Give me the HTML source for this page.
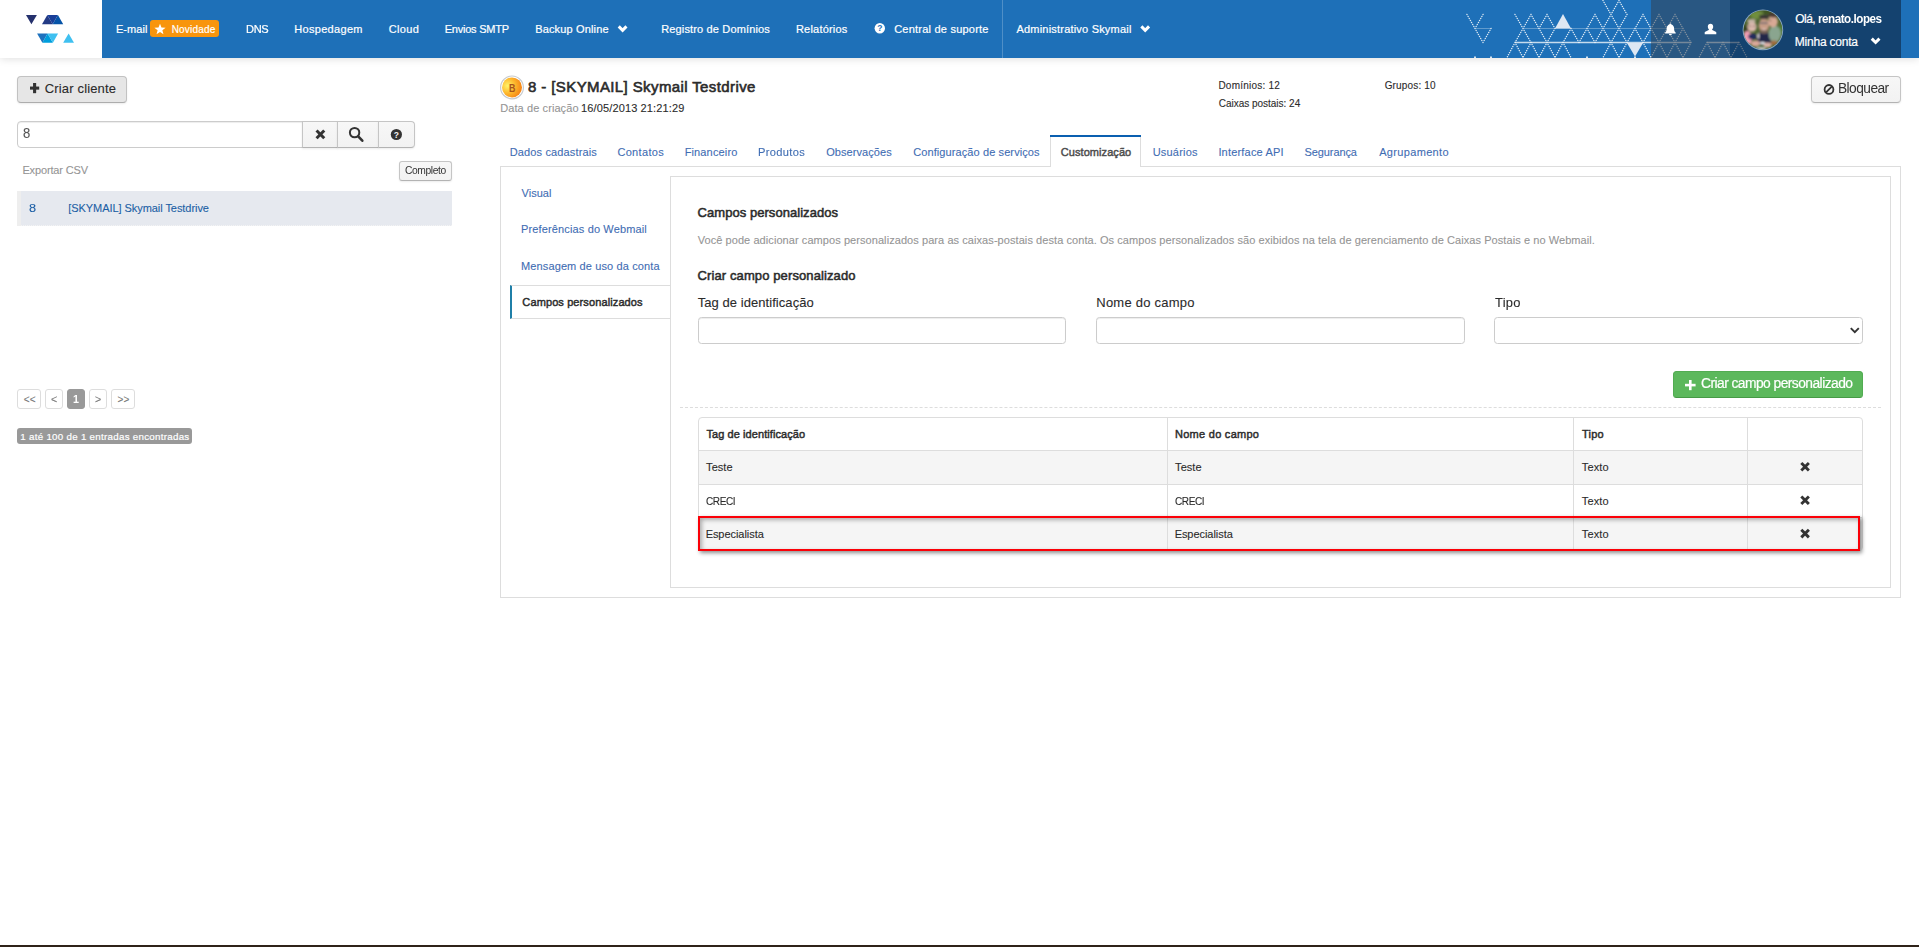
<!DOCTYPE html>
<html lang="pt-BR">
<head>
<meta charset="utf-8">
<title>Skymail - Administrativo</title>
<style>
html,body{margin:0;padding:0;background:#fff;}
body{width:1919px;height:947px;overflow:hidden;position:relative;font-family:"Liberation Sans",sans-serif;}
.a{position:absolute;box-sizing:border-box;}
.t{position:absolute;line-height:1;white-space:pre;transform-origin:0 0;font-family:"Liberation Sans",sans-serif;}
svg{position:absolute;overflow:visible;}
.btn{position:absolute;box-sizing:border-box;border:1px solid #c5c5c5;border-bottom-color:#b3b3b3;border-radius:4px;background:linear-gradient(#f7f7f7,#f2f2f2);box-shadow:0 1px 2px rgba(0,0,0,.08);}
.inp{position:absolute;box-sizing:border-box;border:1px solid #ccc;border-radius:3.5px;background:#fff;box-shadow:inset 0 1px 1px rgba(0,0,0,.075);}
.pg{position:absolute;box-sizing:border-box;border:1px solid #ddd;border-radius:3px;background:#fff;top:389px;height:20px;}
.vl{position:absolute;width:1px;background:#ddd;}
.hl{position:absolute;height:1px;background:#ddd;}
</style>
</head>
<body>
<!-- HEADER -->
<div class="a" id="hdr" style="left:0;top:0;width:1919px;height:58px;background:#1e70b8;box-shadow:0 1px 8px rgba(0,0,0,.13);"></div>
<div class="a" style="left:0;top:0;width:102px;height:58px;background:#fff;"></div>
<svg class="a" style="left:0;top:0" width="102" height="58" viewBox="0 0 102 58">
<polygon points="26,15 36.9,15 31.4,24.3" fill="#25316d"/>
<polygon points="42,24.3 47.3,15 52.7,24.3" fill="#233b85"/>
<polygon points="47.3,15 57.9,15 52.7,24.3" fill="#1a3f99"/>
<polygon points="52.7,24.3 57.9,15 63.2,24.3" fill="#0654a8"/>
<polygon points="37.1,33.4 47.6,33.4 42.4,42.8" fill="#1e72be"/>
<polygon points="42.4,42.8 47.6,33.4 52.9,42.8" fill="#009edc"/>
<polygon points="47.6,33.4 58.1,33.4 52.9,42.8" fill="#3fc0f0"/>
<polygon points="63.2,42.8 68.6,33.4 74,42.8" fill="#3fc0f0"/>
</svg>
<div class="a" style="left:150px;top:20px;width:69px;height:17px;background:#f8950d;border-radius:3px;"></div>
<div class="a" style="left:1002px;top:0;width:1px;height:58px;background:rgba(255,255,255,.22);"></div>
<svg class="a" style="left:0;top:0" width="1919" height="58" viewBox="0 0 1919 58">
<path d="M1467,14.5L1475,28.5 M1483,14.5L1475,28.5 M1475,28.5L1483,42.5 M1491,28.5L1483,42.5 M1515,14.5L1523,28.5 M1531,14.5L1523,28.5 M1531,14.5L1539,28.5 M1547,14.5L1539,28.5 M1547,14.5L1555,28.5 M1595,14.5L1587,28.5 M1595,14.5L1603,28.5 M1611,14.5L1603,28.5 M1611,14.5L1619,28.5 M1627,14.5L1619,28.5 M1643,14.5L1635,28.5 M1643,14.5L1651,28.5 M1659,14.5L1651,28.5 M1659,14.5L1667,28.5 M1675,14.5L1667,28.5 M1675,14.5L1683,28.5 M1603,0.5L1611,14.5 M1619,0.5L1611,14.5 M1619,0.5L1627,14.5 M1523,28.5L1515,42.5 M1523,28.5L1531,42.5 M1539,28.5L1547,42.5 M1555,28.5L1547,42.5 M1571,28.5L1563,42.5 M1571,28.5L1579,42.5 M1587,28.5L1579,42.5 M1587,28.5L1595,42.5 M1603,28.5L1595,42.5 M1603,28.5L1611,42.5 M1619,28.5L1611,42.5 M1619,28.5L1627,42.5 M1635,28.5L1627,42.5 M1635,28.5L1643,42.5 M1651,28.5L1643,42.5 M1651,28.5L1659,42.5 M1667,28.5L1659,42.5 M1667,28.5L1675,42.5 M1683,28.5L1675,42.5 M1683,28.5L1691,42.5 M1515,42.5L1507,57.5 M1515,42.5L1523,57.5 M1531,42.5L1523,57.5 M1531,42.5L1539,57.5 M1547,42.5L1539,57.5 M1547,42.5L1555,57.5 M1563,42.5L1555,57.5 M1563,42.5L1571,57.5 M1611,42.5L1603,57.5 M1611,42.5L1619,57.5 M1627,42.5L1619,57.5 M1643,42.5L1651,57.5 M1659,42.5L1651,57.5 M1659,42.5L1667,57.5 M1675,42.5L1667,57.5 M1675,42.5L1683,57.5 M1691,42.5L1683,57.5 M1707,42.5L1699,57.5 M1707,42.5L1715,57.5 M1723,42.5L1715,57.5 M1723,42.5L1731,57.5 M1739,42.5L1731,57.5 M1739,42.5L1747,57.5" fill="none" stroke="#fff" stroke-opacity=".85" stroke-width="1.45" stroke-dasharray="0.01 2.2935" stroke-linecap="round"/>
<path d="M1475,28.5H1491M1523,28.5H1683" stroke="#fff" stroke-opacity=".3" stroke-width="1" fill="none"/>
<path d="M1515,42.5H1691M1707,42.5H1739" stroke="#fff" stroke-opacity=".75" stroke-width="1.4" fill="none"/>
<polygon points="1563,14 1571,28.4 1555,28.4" fill="#dde7f3"/>
<polygon points="1627,43 1643,43 1635,56.5" fill="#dde7f3"/>
<rect x="1474" y="56.5" width="2" height="1.5" fill="#fff" opacity=".8"/><rect x="1490" y="56.5" width="2" height="1.5" fill="#fff" opacity=".8"/><rect x="1586" y="56.5" width="2" height="1.5" fill="#fff" opacity=".8"/><rect x="1634" y="56.5" width="2" height="1.5" fill="#fff" opacity=".8"/>
</svg>
<div class="a" style="left:1651px;top:0;width:79px;height:58px;background:rgba(51,68,85,.55);"></div>
<div class="a" style="left:1730px;top:0;width:171px;height:58px;background:rgba(13,35,62,.6);"></div>
<svg class="a" style="left:0;top:0" width="1919" height="58" viewBox="0 0 1919 58">
<polygon points="160.00,23.70 161.47,27.58 165.61,27.78 162.38,30.37 163.47,34.37 160.00,32.10 156.53,34.37 157.62,30.37 154.39,27.78 158.53,27.58" fill="#fff"/>
<polyline points="618.75,26.43 622.60,30.28 626.45,26.43" fill="none" stroke="#fff" stroke-width="3.0" stroke-linecap="butt" stroke-linejoin="miter"/>
<polyline points="1141.35,26.43 1145.20,30.28 1149.05,26.43" fill="none" stroke="#fff" stroke-width="3.0" stroke-linecap="butt" stroke-linejoin="miter"/>
<polyline points="1871.75,38.63 1875.60,42.48 1879.45,38.63" fill="none" stroke="#fff" stroke-width="3.0" stroke-linecap="butt" stroke-linejoin="miter"/>
<circle cx="879.8" cy="28.3" r="5.2" fill="#fff"/>
<text x="879.8" y="31.4" text-anchor="middle" font-family="Liberation Sans, sans-serif" font-weight="700" font-size="8.5" fill="#1e70b8">?</text>
<path d="M1670.4,23.6c.6,0 1,.4 1,.9c1.7,.5 2.7,2 2.7,3.9c0,2.2 .5,3.4 1.6,4.2v.9h-10.6v-.9c1.1,-.8 1.6,-2 1.6,-4.2c0,-1.900 1,-3.400 2.700,-3.900c0,-.5 .4,-.9 1,-.9zM1669,33.900h2.800c0,.8 -.6,1.400 -1.400,1.400c-.8,0 -1.400,-.6 -1.400,-1.400z" fill="#fff"/>
<path d="M1710.500,23.800c1.600,0 2.700,1.200 2.700,2.900c0,1 -.4,2 -1,2.600c-.2,.2 -.2,.6 .1,.8l3.400,1.600c.4,.2 .6,.5 .6,.9v1.600h-11.600v-1.600c0,-.4 .2,-.7 .6,-.9l3.400,-1.600c.3,-.2 .3,-.6 .1,-.8c-.6,-.6 -1,-1.600 -1,-2.600c0,-1.700 1.100,-2.900 2.700,-2.900z" fill="#fff"/>
<defs><clipPath id="av"><circle cx="1762.900" cy="29.900" r="19.300"/></clipPath>
<filter id="bl" x="-50%" y="-50%" width="200%" height="200%"><feGaussianBlur stdDeviation="0.850"/></filter></defs>
<circle cx="1762.900" cy="29.900" r="20.300" fill="#86a4c0"/>
<g clip-path="url(#av)"><rect x="1742" y="9" width="42" height="42" fill="#4d6430"/>
<g filter="url(#bl)">
<ellipse cx="1757" cy="15" rx="7" ry="4" fill="#6f8f3c"/>
<ellipse cx="1768" cy="12" rx="5" ry="2.500" fill="#3f5524"/>
<ellipse cx="1746" cy="30" rx="3" ry="5" fill="#33421f"/>
<ellipse cx="1781" cy="30" rx="2.500" ry="6" fill="#4f7a35"/>
<rect x="1757" y="33" width="14" height="12" rx="3" fill="#20264a"/>
<ellipse cx="1763.900" cy="25.600" rx="5.200" ry="7.200" fill="#c79c86"/>
<ellipse cx="1764" cy="16.800" rx="5" ry="2.400" fill="#3b3836"/>
<ellipse cx="1764" cy="31.500" rx="4.300" ry="2.200" fill="#7a6558"/>
<ellipse cx="1764" cy="29.300" rx="2" ry="1" fill="#e0c4b8"/>
<rect x="1759.500" y="22.300" width="9" height="1.500" fill="#6e6a70"/>
<ellipse cx="1747.500" cy="38" rx="4.500" ry="7" fill="#f09fb4"/>
<ellipse cx="1752.500" cy="36.500" rx="4.200" ry="3" fill="#232a5e"/>
<ellipse cx="1752" cy="26.800" rx="4.600" ry="5" fill="#dcb9ad"/>
<ellipse cx="1751.500" cy="21" rx="4.300" ry="2" fill="#c4b3a4"/>
<ellipse cx="1750" cy="26.300" rx="0.800" ry="0.700" fill="#5a4a48"/>
<ellipse cx="1754" cy="26.300" rx="0.800" ry="0.700" fill="#5a4a48"/>
<ellipse cx="1774.800" cy="34" rx="6.200" ry="8.500" fill="#8aa58f"/>
<ellipse cx="1772.800" cy="21.600" rx="5" ry="5.600" fill="#d8a995"/>
<ellipse cx="1773.500" cy="14.800" rx="5" ry="2.600" fill="#4a3a30"/>
<ellipse cx="1770.300" cy="20.500" rx="0.800" ry="0.700" fill="#4a3a38"/>
<ellipse cx="1774" cy="42.800" rx="3.300" ry="2.200" fill="#a06a3a"/>
<ellipse cx="1755.500" cy="43.500" rx="4.500" ry="3" fill="#d9a79a"/>
<ellipse cx="1767.500" cy="45" rx="4" ry="2.500" fill="#ddb0a4"/>
<ellipse cx="1762.500" cy="43.300" rx="2.600" ry="1.200" fill="#eef0f2"/>
<ellipse cx="1758.300" cy="36" rx="1" ry="3" fill="#e8dfe2"/>
<ellipse cx="1761" cy="48.500" rx="5" ry="1.500" fill="#c9ccd0"/>
</g></g>
</svg>
<!-- SIDEBAR -->
<div class="btn" style="left:17px;top:76px;width:110px;height:27px;background:#e6e6e6;border-color:#c2c2c2;border-bottom-color:#adadad;"></div>
<div class="inp" style="left:17px;top:121px;width:286px;height:27px;border-radius:4px 0 0 4px;"></div>
<div class="btn" style="left:302px;top:121px;width:36px;height:27px;border-radius:0;"></div>
<div class="btn" style="left:337px;top:121px;width:42px;height:27px;border-radius:0;"></div>
<div class="btn" style="left:378px;top:121px;width:37px;height:27px;border-radius:0 4px 4px 0;"></div>
<div class="btn" style="left:399px;top:161px;width:53px;height:20px;border-radius:3px;"></div>
<div class="a" style="left:17px;top:191px;width:435px;height:35px;background:#e6e9ef;border-bottom:1px dotted #f4f4f4;"></div>
<div class="a" style="left:17px;top:191px;width:4px;height:35px;background:#eee;"></div>
<div class="pg" style="left:17px;width:24px;"></div>
<div class="pg" style="left:45px;width:18px;"></div>
<div class="pg" style="left:67px;width:18px;background:#999;border-color:#999;"></div>
<div class="pg" style="left:89px;width:18px;"></div>
<div class="pg" style="left:111px;width:24px;"></div>
<div class="a" style="left:17px;top:428px;width:175px;height:16px;background:#999;border-radius:3px;"></div>
<!-- MAIN -->
<svg class="a" style="left:498px;top:74px" width="28" height="28" viewBox="498 74 28 28">
<defs><radialGradient id="cg" cx="0.28" cy="0.42" r="0.85"><stop offset="0" stop-color="#fff56a"/><stop offset=".45" stop-color="#fdb62c"/><stop offset="1" stop-color="#f2700c"/></radialGradient></defs>
<circle cx="512" cy="87.400" r="11.400" fill="#fff" stroke="#c6cace" stroke-width="1.2"/>
<circle cx="512" cy="87.400" r="10" fill="url(#cg)"/>
<text x="512.200" y="91.700" text-anchor="middle" font-family="Liberation Sans, sans-serif" font-weight="700" font-size="11.5" fill="#a8531a" textLength="6.4" lengthAdjust="spacingAndGlyphs">B</text>
</svg>
<div class="btn" style="left:1811px;top:76px;width:90px;height:27px;"></div>
<!-- tabs + boxes -->
<div class="a" style="left:500px;top:166px;width:1401px;height:432px;border:1px solid #ddd;"></div>
<div class="a" style="left:1050px;top:137px;width:91px;height:30px;background:#fff;border-left:1px solid #ddd;border-right:1px solid #ddd;"></div>
<div class="a" style="left:1050px;top:135px;width:91px;height:2px;background:#0a5fb0;"></div>
<div class="a" style="left:670px;top:176px;width:1221px;height:412px;border:1px solid #ddd;background:#fff;"></div>
<div class="a" style="left:510px;top:285px;width:160px;height:34px;background:#fff;border-top:1px solid #ddd;border-bottom:1px solid #ddd;border-left:2px solid #1f7fa8;"></div>
<!-- form -->
<div class="inp" style="left:698px;top:317px;width:368px;height:27px;"></div>
<div class="inp" style="left:1096px;top:317px;width:369px;height:27px;"></div>
<div class="inp" style="left:1494px;top:317px;width:369px;height:27px;box-shadow:none;"></div>
<div class="a" style="left:1673px;top:371px;width:190px;height:27px;background:#5cb85c;border:1px solid #52ac52;border-bottom-color:#469a46;border-radius:3.5px;"></div>
<div class="a" style="left:680px;top:407px;width:1201px;height:0;border-top:1px dashed #ddd;"></div>
<!-- table -->
<div class="a" style="left:698px;top:417px;width:1165px;height:134px;border:1px solid #ddd;border-radius:4px;"></div>
<div class="a" style="left:699px;top:451px;width:1163px;height:33px;background:#f5f5f5;"></div>
<div class="a" style="left:699px;top:518px;width:1163px;height:32px;background:#f5f5f5;"></div>
<div class="hl" style="left:699px;top:450px;width:1163px;"></div>
<div class="hl" style="left:699px;top:484px;width:1163px;"></div>
<div class="hl" style="left:699px;top:517px;width:1163px;"></div>
<div class="vl" style="left:1167px;top:418px;height:132px;"></div>
<div class="vl" style="left:1573px;top:418px;height:132px;"></div>
<div class="vl" style="left:1747px;top:418px;height:132px;"></div>
<div class="a" style="left:698px;top:516px;width:1162px;height:35px;border:2px solid #fb0007;box-shadow:2px 2px 4px rgba(0,0,0,.45), inset 2px 2px 4px rgba(0,0,0,.3);"></div>
<svg class="a" style="left:0;top:0" width="1919" height="947" viewBox="0 0 1919 947">
<g stroke="#333" stroke-width="3.1"><line x1="30" y1="88.1" x2="39.2" y2="88.1"/><line x1="34.6" y1="83" x2="34.6" y2="93.2"/></g>
<g stroke="#333" stroke-width="3" stroke-linecap="butt"><line x1="316.55" y1="130.55" x2="324.25" y2="138.25"/><line x1="316.55" y1="138.25" x2="324.25" y2="130.55"/></g>
<circle cx="354.600" cy="132.600" r="4.700" fill="none" stroke="#333" stroke-width="2"/>
<line x1="358.200" y1="136.400" x2="362.300" y2="140.700" stroke="#333" stroke-width="2.600" stroke-linecap="round"/>
<circle cx="396.400" cy="134.500" r="5.600" fill="#333"/>
<text x="396.400" y="137.700" text-anchor="middle" font-family="Liberation Sans, sans-serif" font-weight="700" font-size="8.500" fill="#f5f5f5">?</text>
<circle cx="1829" cy="89.400" r="4.400" fill="none" stroke="#333" stroke-width="1.800"/>
<line x1="1826" y1="92.400" x2="1832" y2="86.400" stroke="#333" stroke-width="1.800"/>
<polyline points="1850.80,328.06 1854.80,332.06 1858.80,328.06" fill="none" stroke="#333" stroke-width="1.9" stroke-linecap="butt" stroke-linejoin="miter"/>
<g stroke="#fff" stroke-width="2.6"><line x1="1685" y1="385.1" x2="1695.6" y2="385.1"/><line x1="1690.3" y1="380" x2="1690.3" y2="390.2"/></g>
<g stroke="#333" stroke-width="2.9" stroke-linecap="butt"><line x1="1801.31" y1="462.91" x2="1808.88" y2="470.49"/><line x1="1801.31" y1="470.49" x2="1808.88" y2="462.91"/></g>
<g stroke="#333" stroke-width="2.9" stroke-linecap="butt"><line x1="1801.31" y1="496.41" x2="1808.88" y2="503.99"/><line x1="1801.31" y1="503.99" x2="1808.88" y2="496.41"/></g>
<g stroke="#333" stroke-width="2.9" stroke-linecap="butt"><line x1="1801.31" y1="529.82" x2="1808.88" y2="537.38"/><line x1="1801.31" y1="537.38" x2="1808.88" y2="529.82"/></g>
</svg>
<div class="a" style="left:0;top:945px;width:1919px;height:2px;background:#2f2319;"></div>
<span class="t" style="left:115.94px;top:24px;font-size:11px;font-weight:400;-webkit-text-stroke:0.2px #fff;letter-spacing:0.05px;color:#fff;">E-mail</span>
<span class="t" style="left:171.63px;top:25px;font-size:10px;font-weight:400;-webkit-text-stroke:0.2px #fff;letter-spacing:0.19px;color:#fff;">Novidade</span>
<span class="t" style="left:245.93px;top:24px;font-size:11px;font-weight:400;-webkit-text-stroke:0.2px #fff;letter-spacing:-0.34px;color:#fff;transform:scaleX(1.007);">DNS</span>
<span class="t" style="left:294.19px;top:24px;font-size:11px;font-weight:400;-webkit-text-stroke:0.2px #fff;letter-spacing:0.32px;color:#fff;">Hospedagem</span>
<span class="t" style="left:388.69px;top:24px;font-size:11px;font-weight:400;-webkit-text-stroke:0.2px #fff;letter-spacing:0.33px;color:#fff;">Cloud</span>
<span class="t" style="left:444.69px;top:24px;font-size:11px;font-weight:400;-webkit-text-stroke:0.2px #fff;letter-spacing:-0.23px;color:#fff;">Envios SMTP</span>
<span class="t" style="left:535.19px;top:24px;font-size:11px;font-weight:400;-webkit-text-stroke:0.2px #fff;letter-spacing:0.15px;color:#fff;">Backup Online</span>
<span class="t" style="left:661.19px;top:24px;font-size:11px;font-weight:400;-webkit-text-stroke:0.2px #fff;letter-spacing:0.15px;color:#fff;">Registro de Domínios</span>
<span class="t" style="left:795.94px;top:24px;font-size:11px;font-weight:400;-webkit-text-stroke:0.2px #fff;letter-spacing:0.21px;color:#fff;">Relatórios</span>
<span class="t" style="left:894.19px;top:24px;font-size:11px;font-weight:400;-webkit-text-stroke:0.2px #fff;letter-spacing:0.22px;color:#fff;">Central de suporte</span>
<span class="t" style="left:1016.5px;top:24px;font-size:11px;font-weight:400;-webkit-text-stroke:0.2px #fff;letter-spacing:0.2px;color:#fff;">Administrativo Skymail</span>
<span class="t" style="left:1795.15px;top:13px;font-size:12px;font-weight:400;-webkit-text-stroke:0.2px #fff;letter-spacing:-0.48px;color:#fff;">Olá,</span>
<span class="t" style="left:1817.66px;top:13px;font-size:12px;font-weight:700;letter-spacing:-0.48px;color:#fff;transform:scaleX(0.9691);">renato.lopes</span>
<span class="t" style="left:1794.81px;top:36px;font-size:12px;font-weight:400;-webkit-text-stroke:0.2px #fff;letter-spacing:-0.22px;color:#fff;">Minha conta</span>
<span class="t" style="left:44.82px;top:82px;font-size:13px;font-weight:400;-webkit-text-stroke:0.1px #2b2b2b;letter-spacing:0.15px;color:#2b2b2b;">Criar cliente</span>
<span class="t" style="left:23.37px;top:126px;font-size:14px;font-weight:400;-webkit-text-stroke:0.1px #555;letter-spacing:0px;color:#555;transform:scaleX(0.9317);">8</span>
<span class="t" style="left:22.39px;top:165px;font-size:11px;font-weight:400;-webkit-text-stroke:0.1px #959595;letter-spacing:-0.14px;color:#959595;">Exportar CSV</span>
<span class="t" style="left:404.67px;top:165px;font-size:10.5px;font-weight:400;letter-spacing:-0.42px;color:#333;transform:scaleX(0.9791);">Completo</span>
<span class="t" style="left:29.04px;top:203px;font-size:11px;font-weight:400;-webkit-text-stroke:0.1px #1c5fa5;letter-spacing:0px;color:#1c5fa5;transform:scaleX(1.1581);">8</span>
<span class="t" style="left:68.31px;top:203px;font-size:11px;font-weight:400;-webkit-text-stroke:0.1px #1c5fa5;letter-spacing:-0.06px;color:#1c5fa5;">[SKYMAIL] Skymail Testdrive</span>
<span class="t" style="left:23.79px;top:395px;font-size:10px;font-weight:400;-webkit-text-stroke:0.1px #777;letter-spacing:0.01px;color:#777;">&lt;&lt;</span>
<span class="t" style="left:51.17px;top:395px;font-size:10px;font-weight:400;-webkit-text-stroke:0.1px #777;letter-spacing:0px;color:#777;transform:scaleX(1.055);">&lt;</span>
<span class="t" style="left:72.77px;top:394px;font-size:10.5px;font-weight:700;letter-spacing:0px;color:#fff;transform:scaleX(1.0213);">1</span>
<span class="t" style="left:95.31px;top:395px;font-size:10px;font-weight:400;-webkit-text-stroke:0.1px #777;letter-spacing:0px;color:#777;transform:scaleX(1.0578);">&gt;</span>
<span class="t" style="left:117.54px;top:395px;font-size:10px;font-weight:400;-webkit-text-stroke:0.1px #777;letter-spacing:0.03px;color:#777;">&gt;&gt;</span>
<span class="t" style="left:20.35px;top:432px;font-size:9.75px;font-weight:400;-webkit-text-stroke:0.2px #fff;letter-spacing:0.28px;color:#fff;">1 até 100 de 1 entradas encontradas</span>
<span class="t" style="left:528.06px;top:79px;font-size:15px;font-weight:400;-webkit-text-stroke:0.6px #2b2b2b;letter-spacing:0.39px;color:#2b2b2b;">8 - [SKYMAIL] Skymail Testdrive</span>
<span class="t" style="left:500.24px;top:103px;font-size:11px;font-weight:400;-webkit-text-stroke:0.1px #959595;letter-spacing:0.09px;color:#959595;">Data de criação</span>
<span class="t" style="left:581.05px;top:103px;font-size:11px;font-weight:400;-webkit-text-stroke:0.1px #2b2b2b;letter-spacing:0.13px;color:#2b2b2b;">16/05/2013 21:21:29</span>
<span class="t" style="left:1218.43px;top:81px;font-size:10px;font-weight:400;-webkit-text-stroke:0.1px #2b2b2b;letter-spacing:0.23px;color:#2b2b2b;">Domínios: 12</span>
<span class="t" style="left:1218.68px;top:99px;font-size:10px;font-weight:400;-webkit-text-stroke:0.1px #2b2b2b;letter-spacing:-0.01px;color:#2b2b2b;">Caixas postais: 24</span>
<span class="t" style="left:1384.63px;top:81px;font-size:10px;font-weight:400;-webkit-text-stroke:0.1px #2b2b2b;letter-spacing:0.16px;color:#2b2b2b;">Grupos: 10</span>
<span class="t" style="left:1838.39px;top:81px;font-size:14px;font-weight:400;letter-spacing:-0.56px;color:#333;transform:scaleX(0.9818);">Bloquear</span>
<span class="t" style="left:509.64px;top:147px;font-size:11px;font-weight:400;-webkit-text-stroke:0.1px #3f6db3;letter-spacing:0.15px;color:#3f6db3;">Dados cadastrais</span>
<span class="t" style="left:617.38px;top:147px;font-size:11px;font-weight:400;-webkit-text-stroke:0.1px #3f6db3;letter-spacing:0.33px;color:#3f6db3;">Contatos</span>
<span class="t" style="left:684.64px;top:147px;font-size:11px;font-weight:400;-webkit-text-stroke:0.1px #3f6db3;letter-spacing:0.15px;color:#3f6db3;">Financeiro</span>
<span class="t" style="left:758.38px;top:147px;font-size:11px;font-weight:400;-webkit-text-stroke:0.1px #3f6db3;letter-spacing:0.33px;color:#3f6db3;transform:scaleX(1.0094);">Produtos</span>
<span class="t" style="left:826.18px;top:147px;font-size:11px;font-weight:400;-webkit-text-stroke:0.1px #3f6db3;letter-spacing:0.07px;color:#3f6db3;">Observações</span>
<span class="t" style="left:913.18px;top:147px;font-size:11px;font-weight:400;-webkit-text-stroke:0.1px #3f6db3;letter-spacing:0.1px;color:#3f6db3;">Configuração de serviços</span>
<span class="t" style="left:1060.76px;top:147px;font-size:11px;font-weight:400;-webkit-text-stroke:0.44px #4c4c4c;letter-spacing:0.07px;color:#4c4c4c;">Customização</span>
<span class="t" style="left:1152.67px;top:147px;font-size:11px;font-weight:400;-webkit-text-stroke:0.1px #3f6db3;letter-spacing:0.21px;color:#3f6db3;">Usuários</span>
<span class="t" style="left:1218.39px;top:147px;font-size:11px;font-weight:400;-webkit-text-stroke:0.1px #3f6db3;letter-spacing:0.19px;color:#3f6db3;">Interface API</span>
<span class="t" style="left:1304.49px;top:147px;font-size:11px;font-weight:400;-webkit-text-stroke:0.1px #3f6db3;letter-spacing:-0.09px;color:#3f6db3;">Segurança</span>
<span class="t" style="left:1379.21px;top:147px;font-size:11px;font-weight:400;-webkit-text-stroke:0.1px #3f6db3;letter-spacing:0.33px;color:#3f6db3;">Agrupamento</span>
<span class="t" style="left:521.58px;top:188px;font-size:11px;font-weight:400;-webkit-text-stroke:0.1px #3f6db3;letter-spacing:0.02px;color:#3f6db3;">Visual</span>
<span class="t" style="left:521.04px;top:224px;font-size:11px;font-weight:400;-webkit-text-stroke:0.1px #3f6db3;letter-spacing:0.14px;color:#3f6db3;">Preferências do Webmail</span>
<span class="t" style="left:521.04px;top:261px;font-size:11px;font-weight:400;-webkit-text-stroke:0.1px #3f6db3;letter-spacing:0.12px;color:#3f6db3;">Mensagem de uso da conta</span>
<span class="t" style="left:522.36px;top:297px;font-size:11px;font-weight:400;-webkit-text-stroke:0.44px #2b2b2b;letter-spacing:0.11px;color:#2b2b2b;">Campos personalizados</span>
<span class="t" style="left:697.54px;top:206px;font-size:13px;font-weight:400;-webkit-text-stroke:0.52px #2b2b2b;letter-spacing:0.05px;color:#2b2b2b;">Campos personalizados</span>
<span class="t" style="left:697.68px;top:235px;font-size:11px;font-weight:400;-webkit-text-stroke:0.1px #959595;letter-spacing:0.07px;color:#959595;">Você pode adicionar campos personalizados para as caixas-postais desta conta. Os campos personalizados são exibidos na tela de gerenciamento de Caixas Postais e no Webmail.</span>
<span class="t" style="left:697.54px;top:269px;font-size:13px;font-weight:400;-webkit-text-stroke:0.52px #2b2b2b;letter-spacing:0.11px;color:#2b2b2b;">Criar campo personalizado</span>
<span class="t" style="left:697.67px;top:296px;font-size:13px;font-weight:400;-webkit-text-stroke:0.1px #2b2b2b;letter-spacing:0.06px;color:#2b2b2b;">Tag de identificação</span>
<span class="t" style="left:1096.26px;top:296px;font-size:13px;font-weight:400;-webkit-text-stroke:0.1px #2b2b2b;letter-spacing:0.24px;color:#2b2b2b;">Nome do campo</span>
<span class="t" style="left:1495.17px;top:296px;font-size:13px;font-weight:400;-webkit-text-stroke:0.1px #2b2b2b;letter-spacing:0.28px;color:#2b2b2b;transform:scaleX(0.9935);">Tipo</span>
<span class="t" style="left:1700.61px;top:376px;font-size:14px;font-weight:400;-webkit-text-stroke:0.2px #fff;letter-spacing:-0.56px;color:#fff;transform:scaleX(0.9878);">Criar campo personalizado</span>
<span class="t" style="left:706.52px;top:429px;font-size:11px;font-weight:400;-webkit-text-stroke:0.44px #2b2b2b;letter-spacing:0.07px;color:#2b2b2b;">Tag de identificação</span>
<span class="t" style="left:1175.02px;top:429px;font-size:11px;font-weight:400;-webkit-text-stroke:0.44px #2b2b2b;letter-spacing:0.27px;color:#2b2b2b;">Nome do campo</span>
<span class="t" style="left:1581.92px;top:429px;font-size:11px;font-weight:400;-webkit-text-stroke:0.44px #2b2b2b;letter-spacing:0.25px;color:#2b2b2b;">Tipo</span>
<span class="t" style="left:706.11px;top:462px;font-size:11px;font-weight:400;-webkit-text-stroke:0.1px #2b2b2b;letter-spacing:0.03px;color:#2b2b2b;">Teste</span>
<span class="t" style="left:1175.11px;top:462px;font-size:11px;font-weight:400;-webkit-text-stroke:0.1px #2b2b2b;letter-spacing:0.03px;color:#2b2b2b;">Teste</span>
<span class="t" style="left:1581.71px;top:462px;font-size:11px;font-weight:400;-webkit-text-stroke:0.1px #2b2b2b;letter-spacing:0.18px;color:#2b2b2b;">Texto</span>
<span class="t" style="left:705.92px;top:496px;font-size:11px;font-weight:400;-webkit-text-stroke:0.1px #2b2b2b;letter-spacing:-0.44px;color:#2b2b2b;transform:scaleX(0.9133);">CRECI</span>
<span class="t" style="left:1174.92px;top:496px;font-size:11px;font-weight:400;-webkit-text-stroke:0.1px #2b2b2b;letter-spacing:-0.44px;color:#2b2b2b;transform:scaleX(0.9133);">CRECI</span>
<span class="t" style="left:1581.71px;top:496px;font-size:11px;font-weight:400;-webkit-text-stroke:0.1px #2b2b2b;letter-spacing:0.18px;color:#2b2b2b;">Texto</span>
<span class="t" style="left:705.64px;top:529px;font-size:11px;font-weight:400;-webkit-text-stroke:0.1px #2b2b2b;letter-spacing:-0.05px;color:#2b2b2b;">Especialista</span>
<span class="t" style="left:1174.64px;top:529px;font-size:11px;font-weight:400;-webkit-text-stroke:0.1px #2b2b2b;letter-spacing:-0.05px;color:#2b2b2b;">Especialista</span>
<span class="t" style="left:1581.71px;top:529px;font-size:11px;font-weight:400;-webkit-text-stroke:0.1px #2b2b2b;letter-spacing:0.18px;color:#2b2b2b;">Texto</span>
</body>
</html>
